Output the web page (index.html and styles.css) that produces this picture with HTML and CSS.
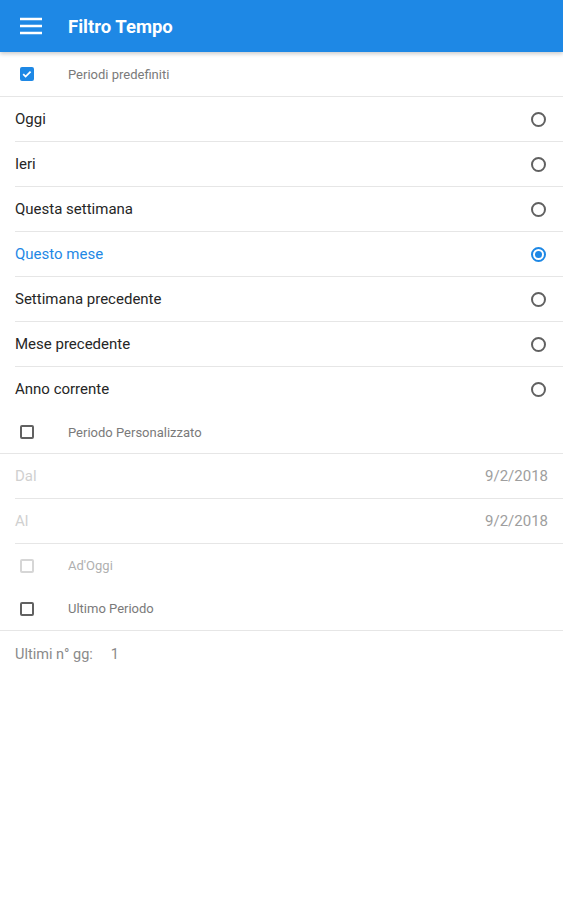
FILE: index.html
```html
<!DOCTYPE html>
<html lang="it">
<head>
    <meta charset="UTF-8">
    <meta name="viewport" content="width=device-width, initial-scale=1.0">
    <title>Filtro Tempo</title>
    <link rel="stylesheet" href="styles.css">
</head>
<body>
    <div id="toolbar">
        <span class="menu-icon">
            <svg width="24" height="24" viewBox="0 0 24 24"><path d="M1 5h22M1 12h22M1 19h22" stroke="#fff" stroke-width="2.6"/></svg>
        </span>
        <span id="toolbar-title">Filtro Tempo</span>
    </div>

    <div class="check-row first">
        <span class="checkbox checked">
            <svg width="14" height="14" viewBox="0 0 14 14"><path d="M3.2 7.2l2.4 2.4 5-5" fill="none" stroke="#fff" stroke-width="1.8"/></svg>
        </span>
        <span class="check-label">Periodi predefiniti</span>
    </div>
    <div class="divider"></div>

    <div class="radio-list">
        <div class="radio-row"><span>Oggi</span><span class="radio"></span></div>
        <div class="radio-row"><span>Ieri</span><span class="radio"></span></div>
        <div class="radio-row"><span>Questa settimana</span><span class="radio"></span></div>
        <div class="radio-row selected"><span>Questo mese</span><span class="radio"></span></div>
        <div class="radio-row"><span>Settimana precedente</span><span class="radio"></span></div>
        <div class="radio-row"><span>Mese precedente</span><span class="radio"></span></div>
        <div class="radio-row last"><span>Anno corrente</span><span class="radio"></span></div>
    </div>

    <div class="check-row custom">
        <span class="checkbox"></span>
        <span class="check-label">Periodo Personalizzato</span>
    </div>
    <div class="divider"></div>

    <div class="date-row"><span class="date-label">Dal</span><span class="date-value">9/2/2018</span></div>
    <div class="date-row"><span class="date-label">Al</span><span class="date-value">9/2/2018</span></div>

    <div class="check-row disabled">
        <span class="checkbox"></span>
        <span class="check-label">Ad'Oggi</span>
    </div>
    <div class="check-row">
        <span class="checkbox"></span>
        <span class="check-label">Ultimo Periodo</span>
    </div>
    <div class="divider"></div>

    <div class="days-row">Ultimi n° gg:<span class="days-value">1</span></div>
</body>
</html>
```

FILE: styles.css
```css
body {
    font-family: Roboto, "Noto Sans", sans-serif;
    margin: 0;
    padding: 0;
    background-color: #ffffff;
    color: #262626;
}
#toolbar {
    height: 52px;
    background-color: #1e88e5;
    display: flex;
    align-items: center;
    box-shadow: 0 2px 4px rgba(0,0,0,0.2);
    position: relative;
}
.menu-icon {
    display: flex;
    margin-left: 19px;
    width: 24px;
    height: 24px;
}
#toolbar-title {
    margin-left: 25px;
    padding-top: 1px;
    color: white;
    font-size: 18.5px;
    font-weight: bold;
}
.check-row {
    height: 43px;
    display: flex;
    align-items: center;
    padding-left: 20px;
}
.check-row.first {
    height: 44px;
}
.check-row.custom {
    height: 42px;
}
.checkbox {
    width: 14px;
    height: 14px;
    box-sizing: border-box;
    border: 2px solid #616161;
    border-radius: 2px;
    display: flex;
}
.checkbox.checked {
    background-color: #1e88e5;
    border-color: #1e88e5;
}
.checkbox.checked svg {
    margin: -2px;
}
.check-label {
    margin-left: 34px;
    font-size: 13px;
    color: #7a7a7a;
}
.check-row.disabled .checkbox {
    border-color: #d6d6d6;
}
.check-row.disabled .check-label {
    color: #b0b0b0;
}
.divider {
    height: 1px;
    background-color: #e6e6e6;
}
.radio-list {
    padding-left: 15px;
}
.radio-row {
    height: 44px;
    display: flex;
    align-items: center;
    justify-content: space-between;
    padding-right: 17px;
    border-bottom: 1px solid #e6e6e6;
    font-size: 15px;
    color: #262626;
}
.radio-row.last {
    border-bottom: none;
}
.radio {
    width: 15px;
    height: 15px;
    box-sizing: border-box;
    border: 2px solid #616161;
    border-radius: 50%;
    display: flex;
    align-items: center;
    justify-content: center;
}
.radio-row.selected {
    color: #1e88e5;
}
.radio-row.selected .radio {
    border-color: #1e88e5;
}
.radio-row.selected .radio::after {
    content: "";
    width: 7px;
    height: 7px;
    border-radius: 50%;
    background-color: #1e88e5;
}
.date-row {
    margin-left: 15px;
    height: 44px;
    display: flex;
    align-items: center;
    justify-content: space-between;
    padding-right: 15px;
    border-bottom: 1px solid #e6e6e6;
    font-size: 15px;
}
.date-label {
    color: #d0d0d0;
}
.date-value {
    color: #9e9e9e;
}
.days-row {
    padding: 15px 15px;
    font-size: 14.5px;
    color: #8a8a8a;
}
.days-value {
    margin-left: 18px;
}
```
